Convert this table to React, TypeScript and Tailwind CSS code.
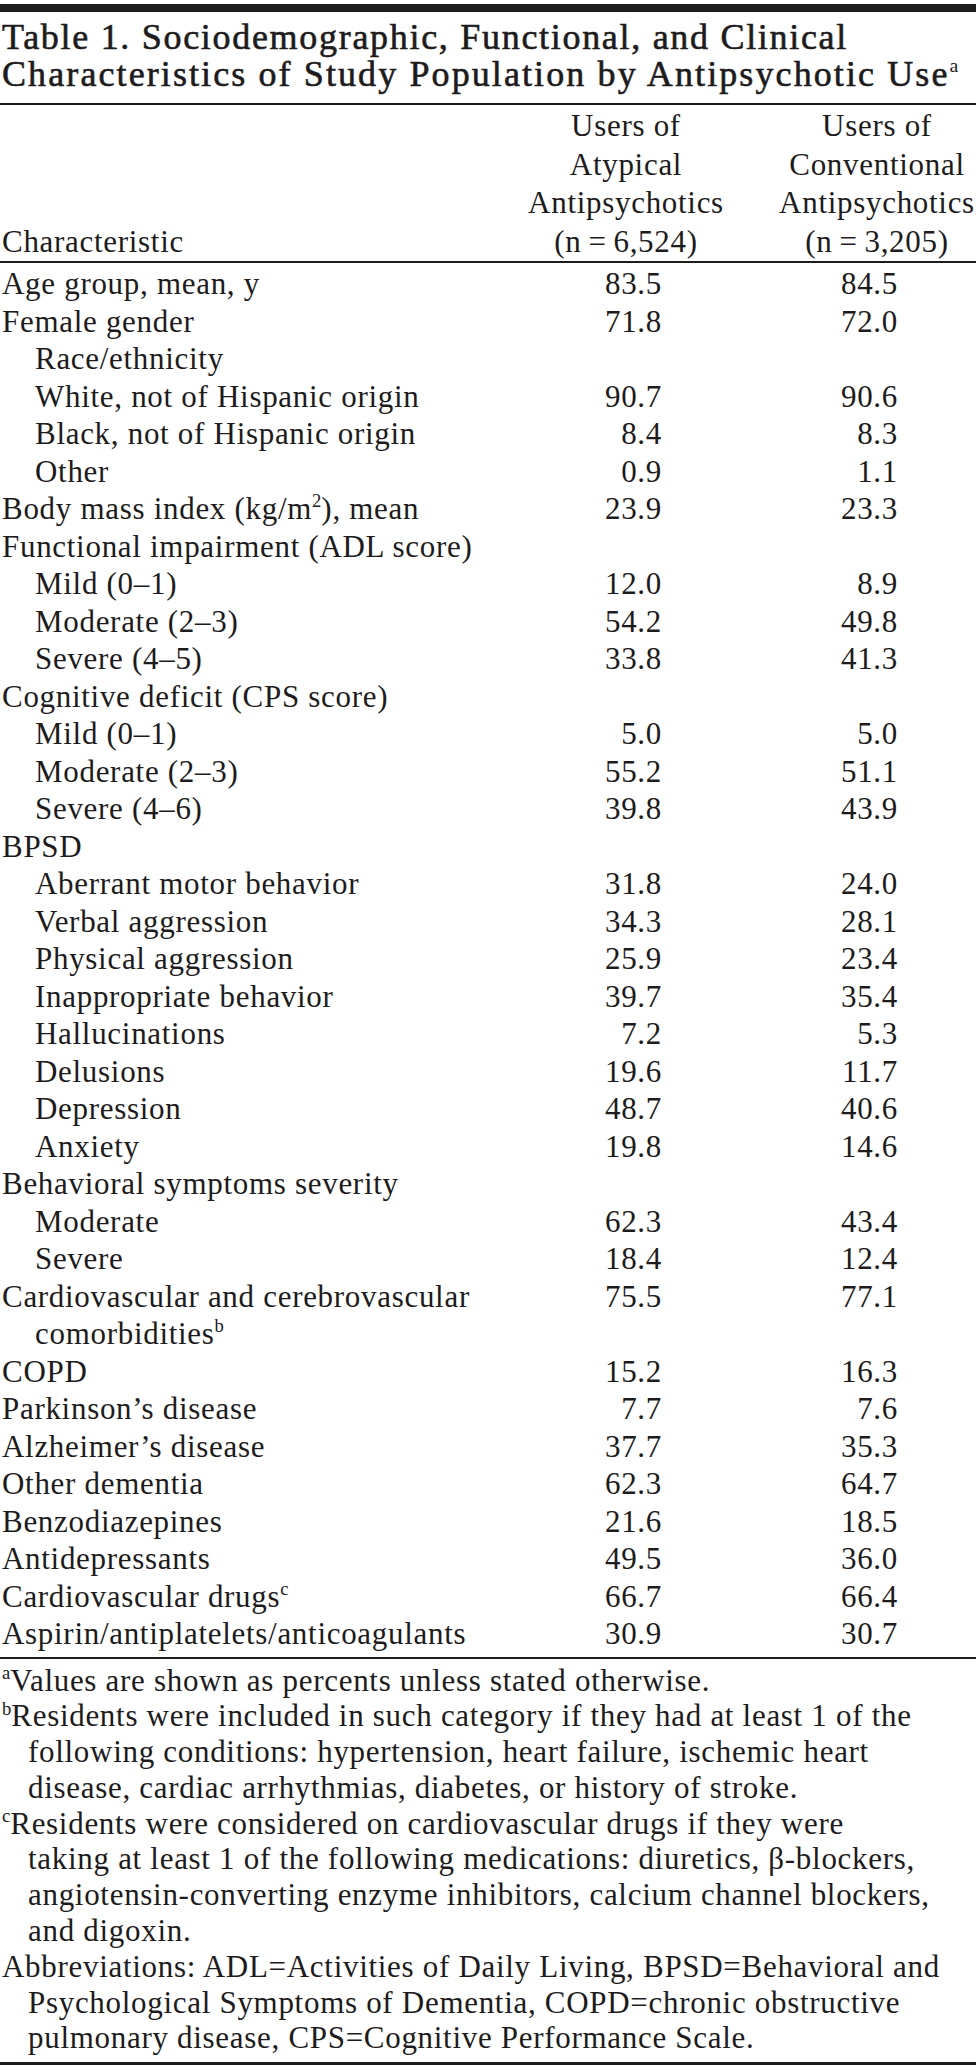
import React from "react";

type Row = { label: React.ReactNode; a?: string; b?: string; indent?: boolean; second?: React.ReactNode };

const Sup = ({ children }: { children: React.ReactNode }) => (
  <sup className="text-[0.6em] relative -top-[0.62em] font-normal tracking-normal">{children}</sup>
);

const rows: Row[] = [
  { label: "Age group, mean, y", a: "83.5", b: "84.5" },
  { label: "Female gender", a: "71.8", b: "72.0" },
  { label: "Race/ethnicity", indent: true },
  { label: "White, not of Hispanic origin", a: "90.7", b: "90.6", indent: true },
  { label: "Black, not of Hispanic origin", a: "8.4", b: "8.3", indent: true },
  { label: "Other", a: "0.9", b: "1.1", indent: true },
  {
    label: (
      <>
        Body mass index (kg/m<Sup>2</Sup>), mean
      </>
    ),
    a: "23.9",
    b: "23.3",
  },
  { label: "Functional impairment (ADL score)" },
  { label: "Mild (0\u20131)", a: "12.0", b: "8.9", indent: true },
  { label: "Moderate (2\u20133)", a: "54.2", b: "49.8", indent: true },
  { label: "Severe (4\u20135)", a: "33.8", b: "41.3", indent: true },
  { label: "Cognitive deficit (CPS score)" },
  { label: "Mild (0\u20131)", a: "5.0", b: "5.0", indent: true },
  { label: "Moderate (2\u20133)", a: "55.2", b: "51.1", indent: true },
  { label: "Severe (4\u20136)", a: "39.8", b: "43.9", indent: true },
  { label: "BPSD" },
  { label: "Aberrant motor behavior", a: "31.8", b: "24.0", indent: true },
  { label: "Verbal aggression", a: "34.3", b: "28.1", indent: true },
  { label: "Physical aggression", a: "25.9", b: "23.4", indent: true },
  { label: "Inappropriate behavior", a: "39.7", b: "35.4", indent: true },
  { label: "Hallucinations", a: "7.2", b: "5.3", indent: true },
  { label: "Delusions", a: "19.6", b: "11.7", indent: true },
  { label: "Depression", a: "48.7", b: "40.6", indent: true },
  { label: "Anxiety", a: "19.8", b: "14.6", indent: true },
  { label: "Behavioral symptoms severity" },
  { label: "Moderate", a: "62.3", b: "43.4", indent: true },
  { label: "Severe", a: "18.4", b: "12.4", indent: true },
  {
    label: "Cardiovascular and cerebrovascular",
    a: "75.5",
    b: "77.1",
    second: (
      <>
        comorbidities<Sup>b</Sup>
      </>
    ),
  },
  { label: "COPD", a: "15.2", b: "16.3" },
  { label: "Parkinson\u2019s disease", a: "7.7", b: "7.6" },
  { label: "Alzheimer\u2019s disease", a: "37.7", b: "35.3" },
  { label: "Other dementia", a: "62.3", b: "64.7" },
  { label: "Benzodiazepines", a: "21.6", b: "18.5" },
  { label: "Antidepressants", a: "49.5", b: "36.0" },
  {
    label: (
      <>
        Cardiovascular drugs<Sup>c</Sup>
      </>
    ),
    a: "66.7",
    b: "66.4",
  },
  { label: "Aspirin/antiplatelets/anticoagulants", a: "30.9", b: "30.7" },
];

function TableRow({ r }: { r: Row }) {
  return (
    <>
      <div className="grid grid-cols-[1fr_304px_198px] h-[37.5px] leading-[37.5px] whitespace-nowrap">
        <div className={r.indent ? "pl-[35px]" : "pl-[2px]"}>{r.label}</div>
        <div className="text-right pr-[116px]">{r.a}</div>
        <div className="text-right pr-[78px]">{r.b}</div>
      </div>
      {r.second && (
        <div className="h-[37.5px] leading-[37.5px] whitespace-nowrap pl-[35px]">{r.second}</div>
      )}
    </>
  );
}

function Note({ mark, children }: { mark?: string; children: React.ReactNode }) {
  return (
    <div className="pl-[28px] -indent-[26px] whitespace-nowrap">
      {mark && <Sup>{mark}</Sup>}
      {children}
    </div>
  );
}

export default function App() {
  return (
    <div
      className="w-[976px] bg-white text-[#1d1b1c] pt-[4px]"
      style={{ fontFamily: '"Liberation Serif", "Times New Roman", serif' }}
    >
      <div className="h-[8px] bg-[#1d1b1c]" />
      <div className="mt-[7px] pl-[2px] text-[36px] leading-[37px] [-webkit-text-stroke:0.6px] whitespace-nowrap">
        <div className="tracking-[1.7px]">Table 1. Sociodemographic, Functional, and Clinical</div>
        <div className="tracking-[2.1px]">
          Characteristics of Study Population by Antipsychotic Use
          <sup className="text-[0.55em] relative -top-[0.7em] tracking-normal [-webkit-text-stroke:0px]">a</sup>
        </div>
      </div>
      <div className="mt-[10px] h-[2px] bg-[#1d1b1c]" />

      <div className="text-[31px] tracking-[0.7px]">
        <div className="grid grid-cols-[1fr_304px_198px] pt-[2px] leading-[38.5px] whitespace-nowrap">
          <div className="flex flex-col justify-end pl-[2px]">Characteristic</div>
          <div className="flex flex-col items-center">
            <div>Users of</div>
            <div>Atypical</div>
            <div>Antipsychotics</div>
            <div>(n{"\u2009"}={"\u2009"}6,524)</div>
          </div>
          <div className="flex flex-col items-center">
            <div>Users of</div>
            <div>Conventional</div>
            <div>Antipsychotics</div>
            <div>(n{"\u2009"}={"\u2009"}3,205)</div>
          </div>
        </div>
        <div className="h-[2px] bg-[#1d1b1c]" />
        <div className="pt-[2px] pb-[4px]">
          {rows.map((r, i) => (
            <TableRow key={i} r={r} />
          ))}
        </div>
        <div className="h-[2px] bg-[#1d1b1c]" />

        <div className="pt-[4px] pb-[6px] leading-[35.8px]">
          <Note mark="a">Values are shown as percents unless stated otherwise.</Note>
          <Note mark="b">
            Residents were included in such category if they had at least 1 of the
            <br />
            following conditions: hypertension, heart failure, ischemic heart
            <br />
            disease, cardiac arrhythmias, diabetes, or history of stroke.
          </Note>
          <Note mark="c">
            Residents were considered on cardiovascular drugs if they were
            <br />
            taking at least 1 of the following medications: diuretics, {"\u03b2"}-blockers,
            <br />
            angiotensin-converting enzyme inhibitors, calcium channel blockers,
            <br />
            and digoxin.
          </Note>
          <Note>
            Abbreviations: ADL=Activities of Daily Living, BPSD=Behavioral and
            <br />
            Psychological Symptoms of Dementia, COPD=chronic obstructive
            <br />
            pulmonary disease, CPS=Cognitive Performance Scale.
          </Note>
        </div>
        <div className="h-[3px] bg-[#1d1b1c]" />
      </div>
    </div>
  );
}
